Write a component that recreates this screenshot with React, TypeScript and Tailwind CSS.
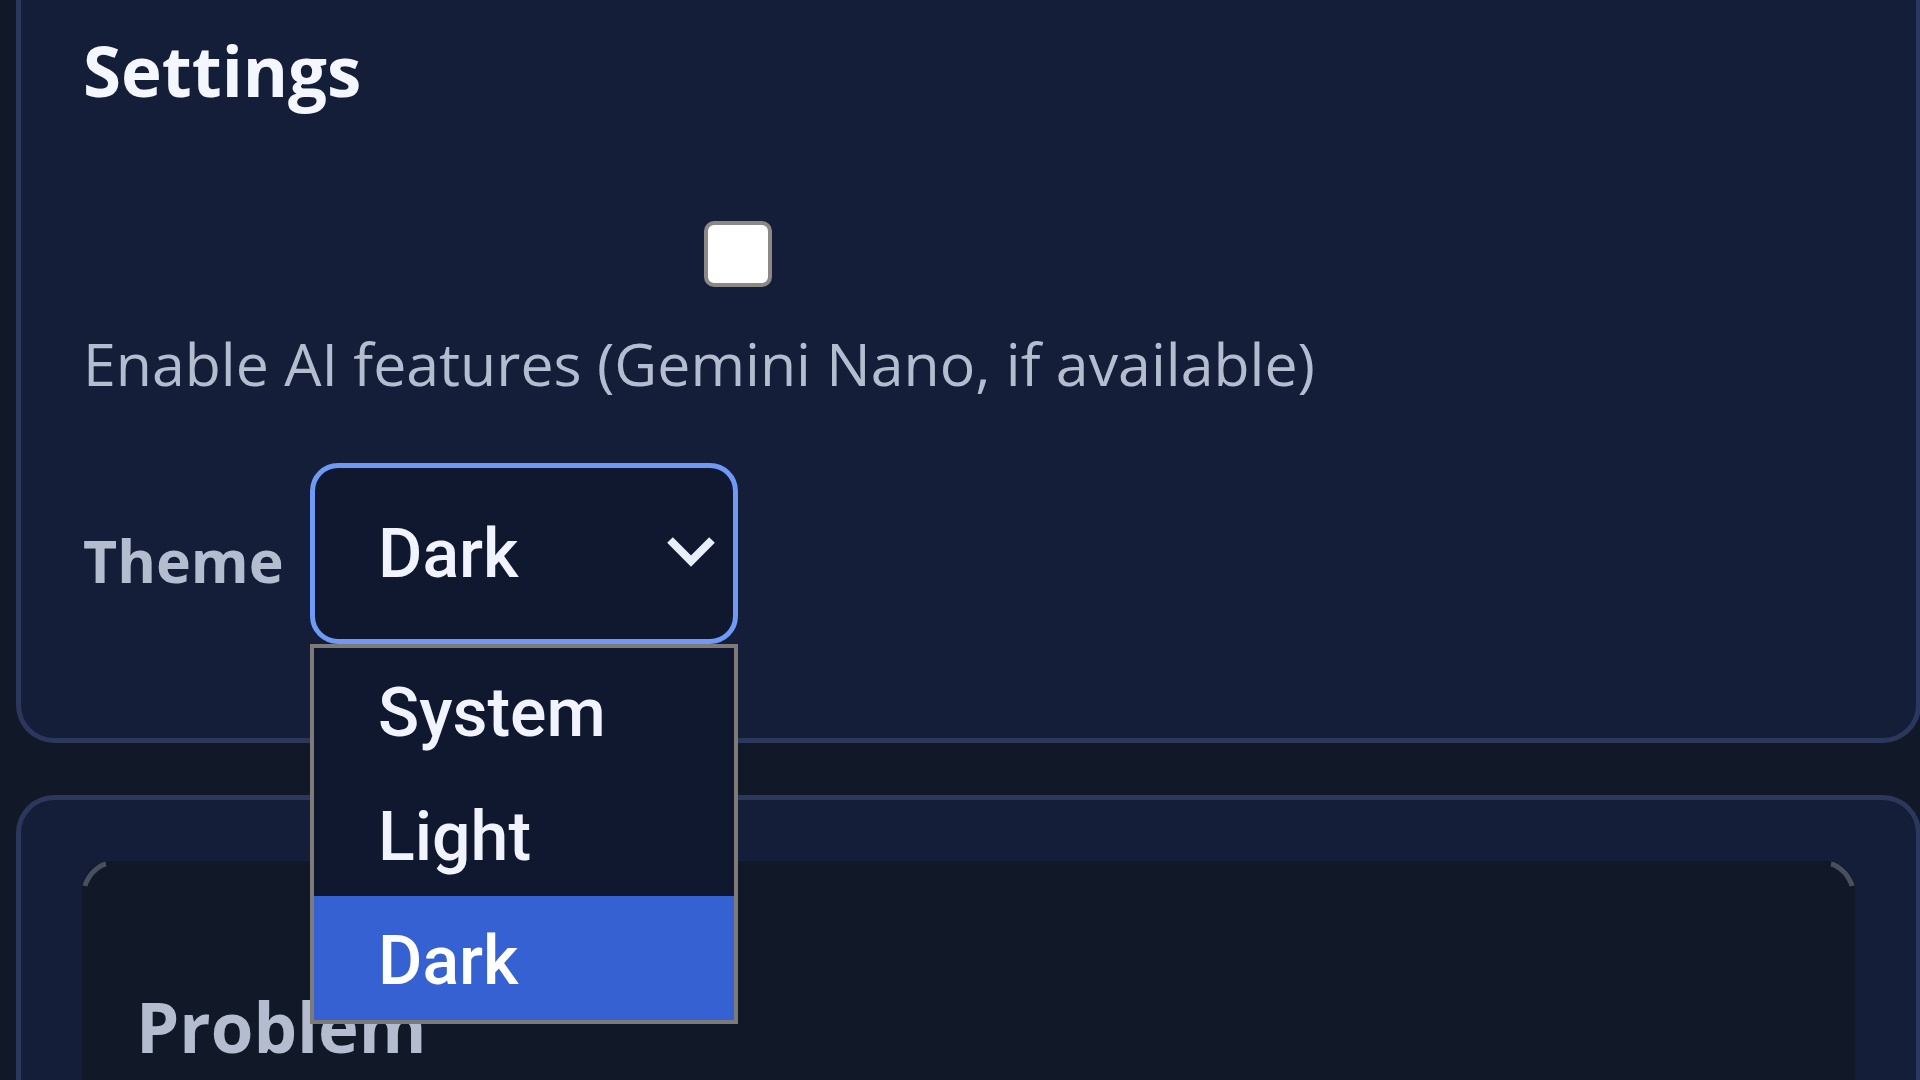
import { useState } from "react";

const THEMES = ["System", "Light", "Dark"];

function Corner({ className }: { className: string }) {
  return (
    <svg className={className} viewBox="0 0 28 28" fill="none" aria-hidden="true">
      <path d="M3 25C4 20 7 16 10 12C14 8 18 4 24 3" stroke="#47505d" strokeWidth="5" />
    </svg>
  );
}

export default function App() {
  const [theme, setTheme] = useState("Dark");
  const [ai, setAi] = useState(false);

  return (
    <div className="h-screen overflow-hidden bg-[#111929] pl-4 font-['Open_Sans','Noto_Sans',sans-serif] text-[#b4bccf]">
      <main className="-mr-px flex flex-col gap-[52px]">
        <section className="rounded-b-[38px] border-5 border-t-0 border-[#2b375b] bg-[#141e38] px-[62px] pt-5 pb-[94px]">
          <h2 className="text-[69px] leading-[100px] font-bold text-[#f4f7ff]">Settings</h2>

          <div className="mt-[101px] flex w-[1310px] max-w-full flex-col">
            <input
              id="ai"
              type="checkbox"
              checked={ai}
              onChange={(e) => setAi(e.target.checked)}
              className="h-[66px] w-[68px] appearance-none self-center rounded-[10px] border-4 border-[#8b8885] bg-white checked:bg-[#3661d3]"
            />
            <label htmlFor="ai" className="mt-[26px] text-[59px] leading-[100px] whitespace-nowrap">
              Enable AI features (Gemini Nano, if available)
            </label>
          </div>

          <div className="mt-[50px] flex items-center gap-[27px]">
            <label htmlFor="theme" className="w-[200px] pt-3 text-[59px] leading-[88px] font-bold">
              Theme
            </label>
            <div className="relative w-[428px] font-[Roboto,'Liberation_Sans',sans-serif] text-[68px] font-medium text-[#f1f4ff]">
              <select
                id="theme"
                value={theme}
                onChange={(e) => setTheme(e.target.value)}
                className="block h-[181px] w-full appearance-none rounded-[28px] border-5 border-[#6f99f5] bg-[#101830] pr-20 pl-[63px] outline-none"
              >
                {THEMES.map((t) => (
                  <option key={t}>{t}</option>
                ))}
              </select>
              <svg
                className="pointer-events-none absolute top-[71px] right-[22px] h-9 w-[50px]"
                viewBox="0 0 50 36"
                fill="none"
                aria-hidden="true"
              >
                <path d="M4 6L25 27L46 6" stroke="#e9eefb" strokeWidth="8" />
              </svg>
              <div
                role="listbox"
                aria-label="Theme"
                className="absolute top-full left-0 z-10 w-full border-4 border-[#7d7a77] bg-[#101830]"
              >
                {THEMES.map((t) => (
                  <button
                    key={t}
                    type="button"
                    role="option"
                    aria-selected={t === theme}
                    onClick={() => setTheme(t)}
                    className="block h-[124px] w-full pt-1.5 pl-16 text-left leading-[118px] aria-selected:bg-[#3661d3] aria-selected:text-white"
                  >
                    {t}
                  </button>
                ))}
              </div>
            </div>
          </div>
        </section>

        <section className="rounded-t-[38px] border-5 border-b-0 border-[#2b375b] bg-[#141e38] px-[61px] pt-[61px]">
          <div className="relative rounded-t-[28px] bg-[#111929] px-[54px] pt-[115px] pb-40">
            <Corner className="absolute top-0 left-0 size-7" />
            <Corner className="absolute top-0 right-0 size-7 -scale-x-100" />
            <h3 className="text-[69px] leading-[100px] font-bold">Problem</h3>
          </div>
        </section>
      </main>
    </div>
  );
}
